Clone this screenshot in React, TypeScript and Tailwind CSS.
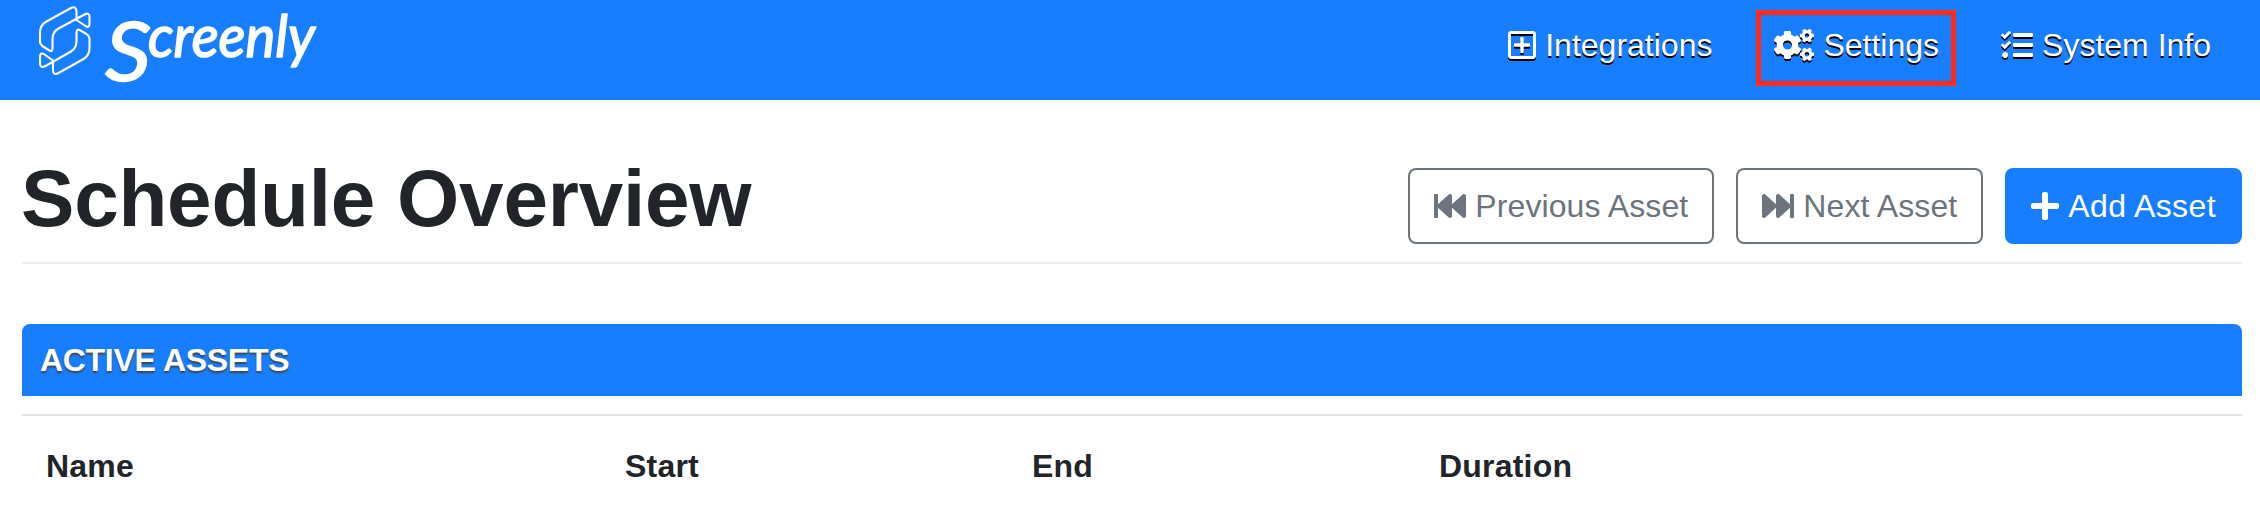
import type { ReactNode } from "react";
import {
  FaCogs,
  FaFastBackward,
  FaFastForward,
  FaPlus,
  FaRegPlusSquare,
  FaTasks,
} from "react-icons/fa";

function Logo() {
  return (
    <a href="#" aria-label="Screenly" className="flex h-[100px] w-[340px] text-white">
      <svg className="h-[100px] w-[340px] shrink-0" viewBox="0 0 340 100" fill="none" stroke="currentColor">
        <g strokeWidth="2.1" strokeLinejoin="round" strokeLinecap="round">
          <path d="M76.500 20V12Q76.500 5.500 71 8L46.500 21.500Q40 25 40 33V41Q40 44.500 43 46.500L49.500 50.500Q52.500 52 52.500 48V39Q52.500 32 58.500 28.500L84.500 14.500Q89.500 12 89.500 17V23.500Q89.500 28.500 85.500 26L76.500 20Z" />
          <path d="M53 60.500V69.500Q53 76 58.500 73L83.500 59Q89.500 55.500 89.500 48V39Q89.500 36 86.500 34L80.500 30.500Q76.500 28 76.500 33V41Q76.500 48 71 51.500L45.500 66Q40 68.500 40 63.500V57Q40 51.500 44.500 54.500L53 60.500Z" />
        </g>
        <g fill="currentColor" strokeLinejoin="round" className="font-[Lato,sans-serif] italic">
          <text x="105" y="81" fontSize="82" strokeWidth="1.6" textLength="46" lengthAdjust="spacingAndGlyphs">
            S
          </text>
          <text x="148" y="57" fontSize="58" strokeWidth="1.6" textLength="167" lengthAdjust="spacingAndGlyphs">
            creenly
          </text>
        </g>
      </svg>
    </a>
  );
}

function NavLink({ icon, children, marked }: { icon: ReactNode; children: ReactNode; marked?: boolean }) {
  return (
    <a
      href="#"
      className="relative flex h-12 items-center gap-[9px] whitespace-nowrap text-white [text-shadow:0_2px_0_#000]"
    >
      <span className="[filter:drop-shadow(0_2px_0_#000)]">{icon}</span>
      {children}
      {marked && (
        <span className="absolute -top-[11px] -left-[18px] h-[76px] w-[200px] border-5 border-[#ff2a1c]" />
      )}
    </a>
  );
}

function Button({ icon, children, primary }: { icon: ReactNode; children: ReactNode; primary?: boolean }) {
  return (
    <button
      className={
        primary
          ? "flex h-[76px] items-center gap-[9px] rounded-lg border-2 border-[#177fff] bg-[#177fff] px-6 tracking-[0.4px] text-white"
          : "flex h-[76px] items-center gap-[9px] rounded-lg border-2 border-[#6c757d] px-6 tracking-[0.1px] text-[#6c757d]"
      }
    >
      {icon}
      <span className="whitespace-nowrap">{children}</span>
    </button>
  );
}

export default function App() {
  return (
    <div className="h-[506px] w-full overflow-hidden bg-white font-['Liberation_Sans',Arial,sans-serif] text-[32px] leading-[48px] text-[#212529]">
      <header className="flex h-[100px] justify-between bg-[#177fff]">
        <Logo />
        <nav className="mt-[21px] mr-[49px] flex gap-[62px]">
          <NavLink icon={<FaRegPlusSquare className="h-8 w-7" />}>Integrations</NavLink>
          <NavLink icon={<FaCogs className="h-8 w-10" />} marked>
            Settings
          </NavLink>
          <NavLink icon={<FaTasks className="size-8" />}>System Info</NavLink>
        </nav>
      </header>

      <main className="px-[22px] pr-[18px]">
        <div className="flex h-[164px] items-start justify-between border-b-2 border-[#eeeeee] pt-[68px]">
          <h1 className="-mt-[17px] -ml-px text-[80px] leading-[96px] font-bold tracking-[-0.2px]">
            Schedule Overview
          </h1>
          <div className="flex gap-[22px]">
            <Button icon={<FaFastBackward className="size-8" />}>Previous Asset</Button>
            <Button icon={<FaFastForward className="size-8" />}>Next Asset</Button>
            <Button primary icon={<FaPlus className="h-8 w-7" />}>
              Add Asset
            </Button>
          </div>
        </div>

        <section className="mt-[60px]">
          <h2 className="flex h-[72px] items-center rounded-t-lg bg-[#177fff] pl-[18px] font-bold tracking-[-0.3px] text-white [text-shadow:0_2px_2px_#444]">
            ACTIVE ASSETS
          </h2>
          <table className="mt-[18px] w-full table-fixed border-t-2 border-[#dee2e6] text-left">
            <thead>
              <tr className="tracking-[0.2px]">
                <th className="w-[579px] px-6 pt-[26px]">Name</th>
                <th className="w-[407px] px-6 pt-[26px]">Start</th>
                <th className="w-[407px] px-6 pt-[26px]">End</th>
                <th className="px-6 pt-[26px]">Duration</th>
              </tr>
            </thead>
          </table>
        </section>
      </main>
    </div>
  );
}
